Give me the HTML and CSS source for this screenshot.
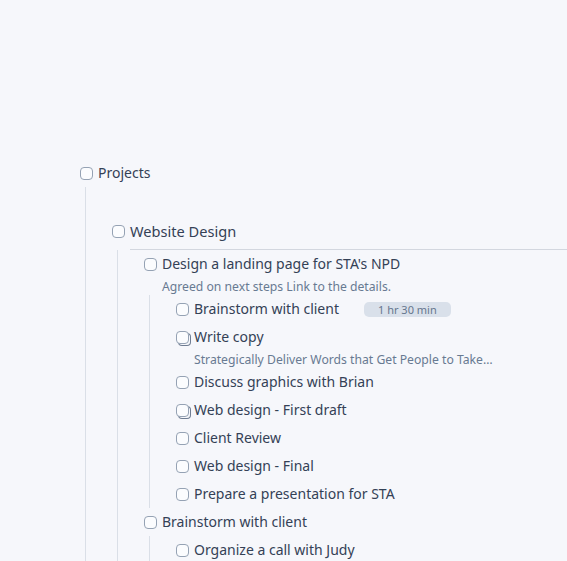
FILE: index.html
```html
<!DOCTYPE html>
<html lang="en">

<head>
    <meta charset="UTF-8">
    <meta name="viewport" content="width=device-width, initial-scale=1.0">
    <title>Projects</title>
    <link rel="stylesheet" href="styles.css">
</head>

<body>
    <div class="tree">
        <div class="node">
            <div class="row">
                <span class="check"></span>
                <span class="title">Projects</span>
            </div>

            <div class="children">
                <div class="node section">
                    <div class="row section-row">
                        <span class="check"></span>
                        <span class="title section-title">Website Design</span>
                    </div>

                    <div class="children">
                        <div class="node">
                            <div class="row">
                                <span class="check"></span>
                                <span class="title">Design a landing page for STA's NPD</span>
                            </div>
                            <p class="note">Agreed on next steps Link to the details.</p>

                            <div class="children">
                                <div class="row">
                                    <span class="check"></span>
                                    <span class="title">Brainstorm with client</span>
                                    <span class="badge">1 hr 30 min</span>
                                </div>
                                <div class="row">
                                    <span class="check stacked"></span>
                                    <span class="title">Write copy</span>
                                </div>
                                <p class="note">Strategically Deliver Words that Get People to Take…</p>
                                <div class="row">
                                    <span class="check"></span>
                                    <span class="title">Discuss graphics with Brian</span>
                                </div>
                                <div class="row">
                                    <span class="check stacked"></span>
                                    <span class="title">Web design - First draft</span>
                                </div>
                                <div class="row">
                                    <span class="check"></span>
                                    <span class="title">Client Review</span>
                                </div>
                                <div class="row">
                                    <span class="check"></span>
                                    <span class="title">Web design - Final</span>
                                </div>
                                <div class="row">
                                    <span class="check"></span>
                                    <span class="title">Prepare a presentation for STA</span>
                                </div>
                            </div>
                        </div>

                        <div class="node">
                            <div class="row">
                                <span class="check"></span>
                                <span class="title">Brainstorm with client</span>
                            </div>

                            <div class="children">
                                <div class="row">
                                    <span class="check"></span>
                                    <span class="title">Organize a call with Judy</span>
                                </div>
                            </div>
                        </div>
                    </div>
                </div>
            </div>
        </div>
    </div>
</body>

</html>
```

FILE: styles.css
```css
body {
    margin: 0;
    height: 561px;
    overflow: hidden;
    background-color: #f6f7fb;
    font-family: "Noto Sans", "Open Sans", sans-serif;
    font-size: 14px;
    color: #344156;
}

.tree {
    padding: 159px 0 0 80px;
}

.row {
    display: flex;
    align-items: center;
    height: 28px;
    white-space: nowrap;
}

.check {
    flex: none;
    width: 11px;
    height: 11px;
    border: 1px solid #95a2b4;
    border-radius: 4px;
    background-color: #fbfcfe;
    margin-right: 5px;
}

.check.stacked {
    box-shadow: 2px 2px 0 -1px #f6f7fb, 2px 2px 0 0 #6f7d92;
}

.title {
    line-height: 28px;
}

.children {
    margin-left: 5px;
    padding-left: 26px;
    border-left: 1px solid #dadfe7;
}

.section {
    padding-top: 30px;
}

.section-row {
    align-items: flex-start;
    height: auto;
}

.section-row .check {
    margin-top: 8px;
}

.section-title {
    flex: 1;
    font-size: 14.6px;
    padding-bottom: 4px;
    border-bottom: 1px solid #d3d7df;
}

.note {
    margin: 0 0 0 18px;
    height: 17px;
    line-height: 17px;
    font-size: 12.2px;
    color: #687a92;
    white-space: nowrap;
}

.badge {
    margin-left: 25px;
    padding: 0 14px;
    height: 15px;
    line-height: 15px;
    border-radius: 5px;
    background-color: #d9e0ea;
    color: #66768e;
    font-size: 11px;
}
```
